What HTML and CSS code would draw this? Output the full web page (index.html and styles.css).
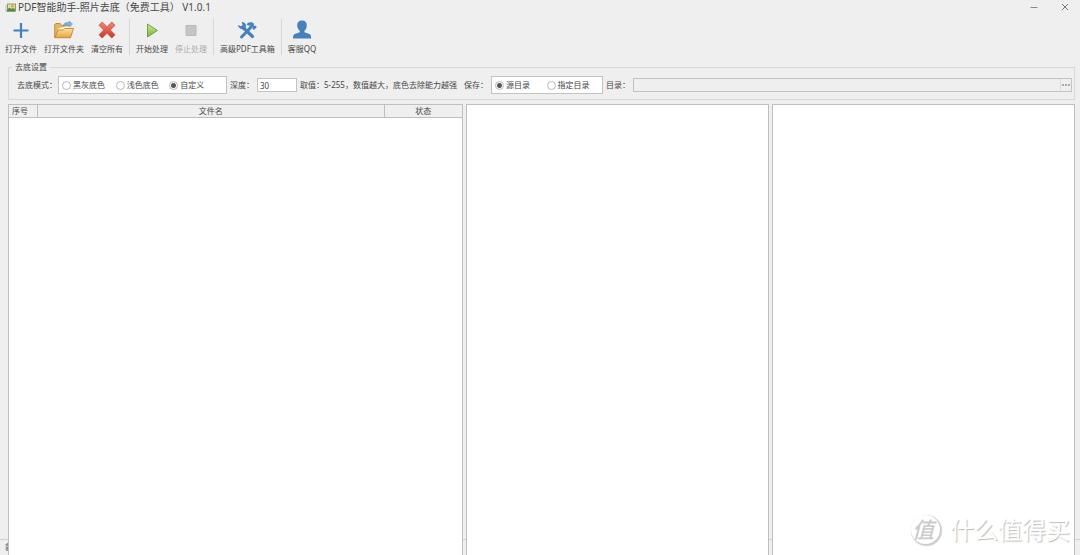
FILE: index.html
```html
<!DOCTYPE html>
<html lang="zh-CN">
<head>
<meta charset="utf-8">
<title>PDF智能助手-照片去底（免费工具） V1.0.1</title>
<link rel="stylesheet" href="styles.css">
</head>
<body>
<div class="window">
  <header class="titlebar">
    <svg class="app-icon" viewBox="0 0 11 9" aria-hidden="true">
      <path fill="#cfd6da" d="M0 2h3v6.500H0z"/><path fill="#8d9a80" d="M2 .5h9v8H2z"/>
      <path fill="#ecdca0" d="M3 1.500h7v4H3z"/><path fill="#4c8a3e" d="M1 8.500l3.500-4 2 2 1.500-1.500 2.500 3.500z"/><circle cx="7.500" cy="3.200" r="1.400" fill="#e8a52e"/>
    </svg>
    <h1 class="title">PDF智能助手-照片去底（免费工具） V1.0.1</h1>
    <button class="win-btn" type="button" aria-label="最小化"><svg viewBox="0 0 10 10"><path d="M1.500 5.500h7" stroke="#888" fill="none"/></svg></button>
    <button class="win-btn" type="button" aria-label="关闭"><svg viewBox="0 0 10 10"><path d="M2 2l6 6M8 2L2 8" stroke="#777" fill="none"/></svg></button>
  </header>

  <nav class="toolbar">
    <button class="tool" type="button">
      <svg viewBox="0 0 20 20"><path d="M10 3v15M2.500 10.500h15" stroke="#4680bd" stroke-width="2.200" fill="none"/></svg>
      <span>打开文件</span>
    </button>
    <button class="tool" type="button">
      <svg viewBox="0 0 20 20">
        <defs><linearGradient id="folder" x2="0" y2="1"><stop stop-color="#fbe1a0"/><stop offset="1" stop-color="#e8a33c"/></linearGradient></defs>
        <path d="M.7 17.500V4.500l1-1h4.500l1.500 2h8v3" fill="#eab45c" stroke="#bd7a28" stroke-width=".8"/>
        <path d="M4 8l13-3v8H4z" fill="#fdf4dc" stroke="#d7b070" stroke-width=".5"/>
        <path d="M.7 17.700L4.200 10h5l1.500-1.500h8.800L16.500 17.700z" fill="url(#folder)" stroke="#c27c22" stroke-width=".8"/>
        <path d="M9 6.500C9.500 3.200 12 2 15 2.700V1.200l3.500 2.800-3.800 3V5.300C12.500 4.700 10.700 5 9 6.500z" fill="#7db6dc" stroke="#4d8ab5" stroke-width=".5"/>
      </svg>
      <span>打开文件夹</span>
    </button>
    <button class="tool" type="button">
      <svg viewBox="0 0 20 20">
        <defs><linearGradient id="cross" x2="0" y2="1"><stop stop-color="#ee8b75"/><stop offset="1" stop-color="#cb3528"/></linearGradient></defs>
        <path d="M5.200 2L10 6.800 14.800 2 18 5.200 13.300 10l4.700 4.800-3.200 3.200L10 13.300 5.200 18 2 14.800 6.700 10 2 5.200z" fill="url(#cross)" stroke="#c95142" stroke-width=".8" stroke-linejoin="round"/>
      </svg>
      <span>清空所有</span>
    </button>
    <span class="sep"></span>
    <button class="tool" type="button">
      <svg viewBox="0 0 20 20">
        <defs><linearGradient id="play" x2="0" y2="1"><stop stop-color="#d0ea98"/><stop offset="1" stop-color="#76b530"/></linearGradient></defs>
        <path d="M5.500 4L15.500 10.500l-10 6.500z" fill="url(#play)" stroke="#77a346" stroke-linejoin="round"/>
      </svg>
      <span>开始处理</span>
    </button>
    <button class="tool" type="button" disabled>
      <svg viewBox="0 0 20 20"><path d="M5 5.500h10v10H5z" fill="#c5c5c5" stroke="#b8b8b8"/></svg>
      <span>停止处理</span>
    </button>
    <span class="sep"></span>
    <button class="tool" type="button">
      <svg viewBox="0 0 20 20">
        <path d="M6.500 8l9 8.500" fill="none" stroke="#4680bd" stroke-width="3.200" stroke-linecap="round"/>
        <path d="M4.500 17L8.500 13M11.500 9.800L14 7" fill="none" stroke="#4680bd" stroke-width="3" stroke-linecap="round"/>
        <path d="M.8 5l3.200 1.300 1.600-1.300-.8-3C8 2 9.800 4.500 8.700 7.600 6.800 10.200 1.500 9.600.8 5z" fill="#4680bd"/>
        <path d="M9.500 4.500C11.200 2 14.500 1.500 17 3.800l-.3 1.500.8.8 1.300-.3 1 1.200-2.900 3-1.300-1.200.1-1.300-2.200-2-1.500.3z" fill="#4680bd"/>
      </svg>
      <span>高级PDF工具箱</span>
    </button>
    <span class="sep"></span>
    <button class="tool" type="button">
      <svg viewBox="0 0 20 20"><path d="M10 .5c3.400 0 5 2 4.800 5-.1 2.500-1.100 4.400-2.400 5.300v1.500l5 1.800c1.300.5 1.700 1.700 1.800 4.400H1c.1-2.700.5-3.900 1.800-4.400l5-1.800v-1.500C6.500 9.900 5.300 8 5.200 5.500 5 2.500 6.600.5 10 .5z" fill="#4680bd"/></svg>
      <span>客服QQ</span>
    </button>
  </nav>

  <fieldset class="settings">
    <legend>去底设置</legend>
    <div class="settings-row">
      <span id="mode-label" class="mode-label">去底模式：</span>
      <div class="radios radios-mode" role="radiogroup" aria-labelledby="mode-label">
        <label><input type="radio" name="mode">黑灰底色</label>
        <label><input type="radio" name="mode">浅色底色</label>
        <label><input type="radio" name="mode" checked>自定义</label>
      </div>
      <label class="depth-label" for="depth">深度：</label>
      <input class="field depth" id="depth" type="text" value="30">
      <span class="hint">取值：5-255，数值越大，底色去除能力越强</span>
      <span id="save-label" class="save-label">保存：</span>
      <div class="radios radios-save" role="radiogroup" aria-labelledby="save-label">
        <label><input type="radio" name="save" checked>源目录</label>
        <label><input type="radio" name="save">指定目录</label>
      </div>
      <label class="dir-label" for="dir">目录：</label>
      <div class="path">
        <input class="path-input" id="dir" type="text" disabled>
        <button class="browse" type="button" aria-label="浏览"><svg viewBox="0 0 8 2"><path d="M0 0h2v2H0zM3 0h2v2H3zM6 0h2v2H6z" fill="#aaa"/></svg></button>
      </div>
    </div>
  </fieldset>

  <main class="panes">
    <section class="pane list-pane">
      <table class="files">
        <thead><tr><th class="col-no">序号</th><th>文件名</th><th class="col-state">状态</th></tr></thead>
      </table>
    </section>
    <section class="pane"></section>
    <section class="pane"></section>
  </main>

  <footer class="statusbar">就绪</footer>

  <div class="watermark">
    <span class="mark">值</span>
    <span class="mark-text">什么值得买</span>
  </div>
</div>
</body>
</html>
```
FILE: styles.css
```css
* { box-sizing: border-box; }

body {
  margin: 0;
  background: #efefef;
  color: #484848;
  font: 8px/12px "Noto Sans", "Noto Sans CJK SC", sans-serif;
}

button, input { font: inherit; color: inherit; }
button { padding: 0; border: 0; background: none; }
svg { display: block; }

.window {
  position: relative;
  z-index: 0;
  display: flex;
  flex-direction: column;
  height: 100vh;
  overflow: hidden;
}

.titlebar {
  display: flex;
  align-items: center;
  height: 14px;
  padding: 0 10px 0 5px;
}
.app-icon { width: 11px; height: 9px; margin-right: 2px; }
.title { flex: 1; margin: 0; font-size: 10px; font-weight: 400; line-height: 14px; }
.win-btn { width: 10px; height: 12px; margin-left: 21px; }
.win-btn svg { width: 10px; height: 10px; }

.toolbar {
  display: flex;
  gap: 7px;
  padding: 5px 5px 6px;
}
.tool {
  display: flex;
  flex-direction: column;
  align-items: center;
  gap: 3px;
  padding-top: 1px;
  white-space: nowrap;
}
.tool svg { width: 20px; height: 20px; }
.tool:disabled { color: #aaa; }
.sep { width: 1px; margin: 0 -1px; background: #d6d6d6; }

.settings {
  min-width: 0;
  margin: 0 5px 4px 8px;
  padding: 3px 2px 5px 8px;
  border: 1px solid #d8d8d8;
}
.settings legend { margin-left: -5px; padding: 0 3px; line-height: 12px; }
.settings-row { display: flex; align-items: center; white-space: nowrap; }
.mode-label { width: 41px; }
.radios {
  display: grid;
  align-items: center;
  height: 18px;
  padding-left: 3px;
  border: 1px solid #c3c3c3;
  background: #fff;
}
.radios label { display: flex; align-items: center; gap: 2px; }
.radios-mode { grid-template-columns: repeat(3, 1fr); width: 169px; padding-right: 3px; }
.radios-save { grid-template-columns: repeat(2, 1fr); width: 112px; padding-right: 4px; }
.radios input {
  appearance: none;
  width: 9px;
  height: 9px;
  margin: 0;
  border: 1px solid #b8b8b8;
  border-radius: 50%;
  background: #fff;
}
.radios input:checked { background: radial-gradient(circle, #555 2px, #fff 3px); }
.depth-label { width: 27px; margin-left: 3px; }
.field { height: 14px; padding: 0 2px; border: 1px solid #c3c3c3; background: #fff; }
.depth { width: 40px; }
.hint { width: 164px; margin-left: 3px; }
.save-label { width: 27px; }
.dir-label { width: 27px; margin-left: 3px; }
.path { display: flex; flex: 1; min-width: 0; height: 14px; border: 1px solid #c3c3c3; }
.path-input { flex: 1; min-width: 0; padding: 0 2px; border: 0; background: transparent; }
.browse { display: grid; place-items: center; width: 11px; border-left: 1px solid #dcdcdc; }
.browse svg { width: 8px; height: 2px; }

.panes {
  display: grid;
  flex: 1;
  grid-template-columns: 3fr 2fr 2fr;
  gap: 3px;
  min-height: 0;
  padding: 0 5px 0 8px;
}
.pane { border: 1px solid #bfbfbf; border-bottom: 0; background: #fff; }
.files { width: 100%; border-collapse: separate; border-spacing: 0; table-layout: fixed; }
.files th {
  height: 13px;
  padding: 0;
  border-bottom: 1px solid #bfbfbf;
  background: #efefef;
  font-weight: 400;
}
.files th + th { border-left: 1px solid #bfbfbf; }
.files .col-no { width: 28px; padding-left: 3px; text-align: left; }
.files .col-state { width: 78px; }

.statusbar {
  position: absolute;
  z-index: -1;
  right: 0;
  bottom: 0;
  left: 0;
  height: 16px;
  padding: 1px 5px;
  border-top: 1px solid #cfcfcf;
}

.watermark {
  position: absolute;
  right: 10px;
  bottom: 10px;
  display: flex;
  align-items: center;
  gap: 10px;
  font-family: "Noto Sans CJK SC", sans-serif;
  color: #fff;
}
.mark {
  width: 29px;
  height: 29px;
  padding-right: 5px;
  border-radius: 50%;
  box-shadow: 1px 1px 1px 1px #ccc;
  color: #cbcbcb;
  font-size: 22px;
  font-style: italic;
  font-weight: 500;
  line-height: 26px;
  text-align: center;
}
.mark-text { font-size: 24px; line-height: 32px; text-shadow: 1px 1px 1px #bbb; }
```
